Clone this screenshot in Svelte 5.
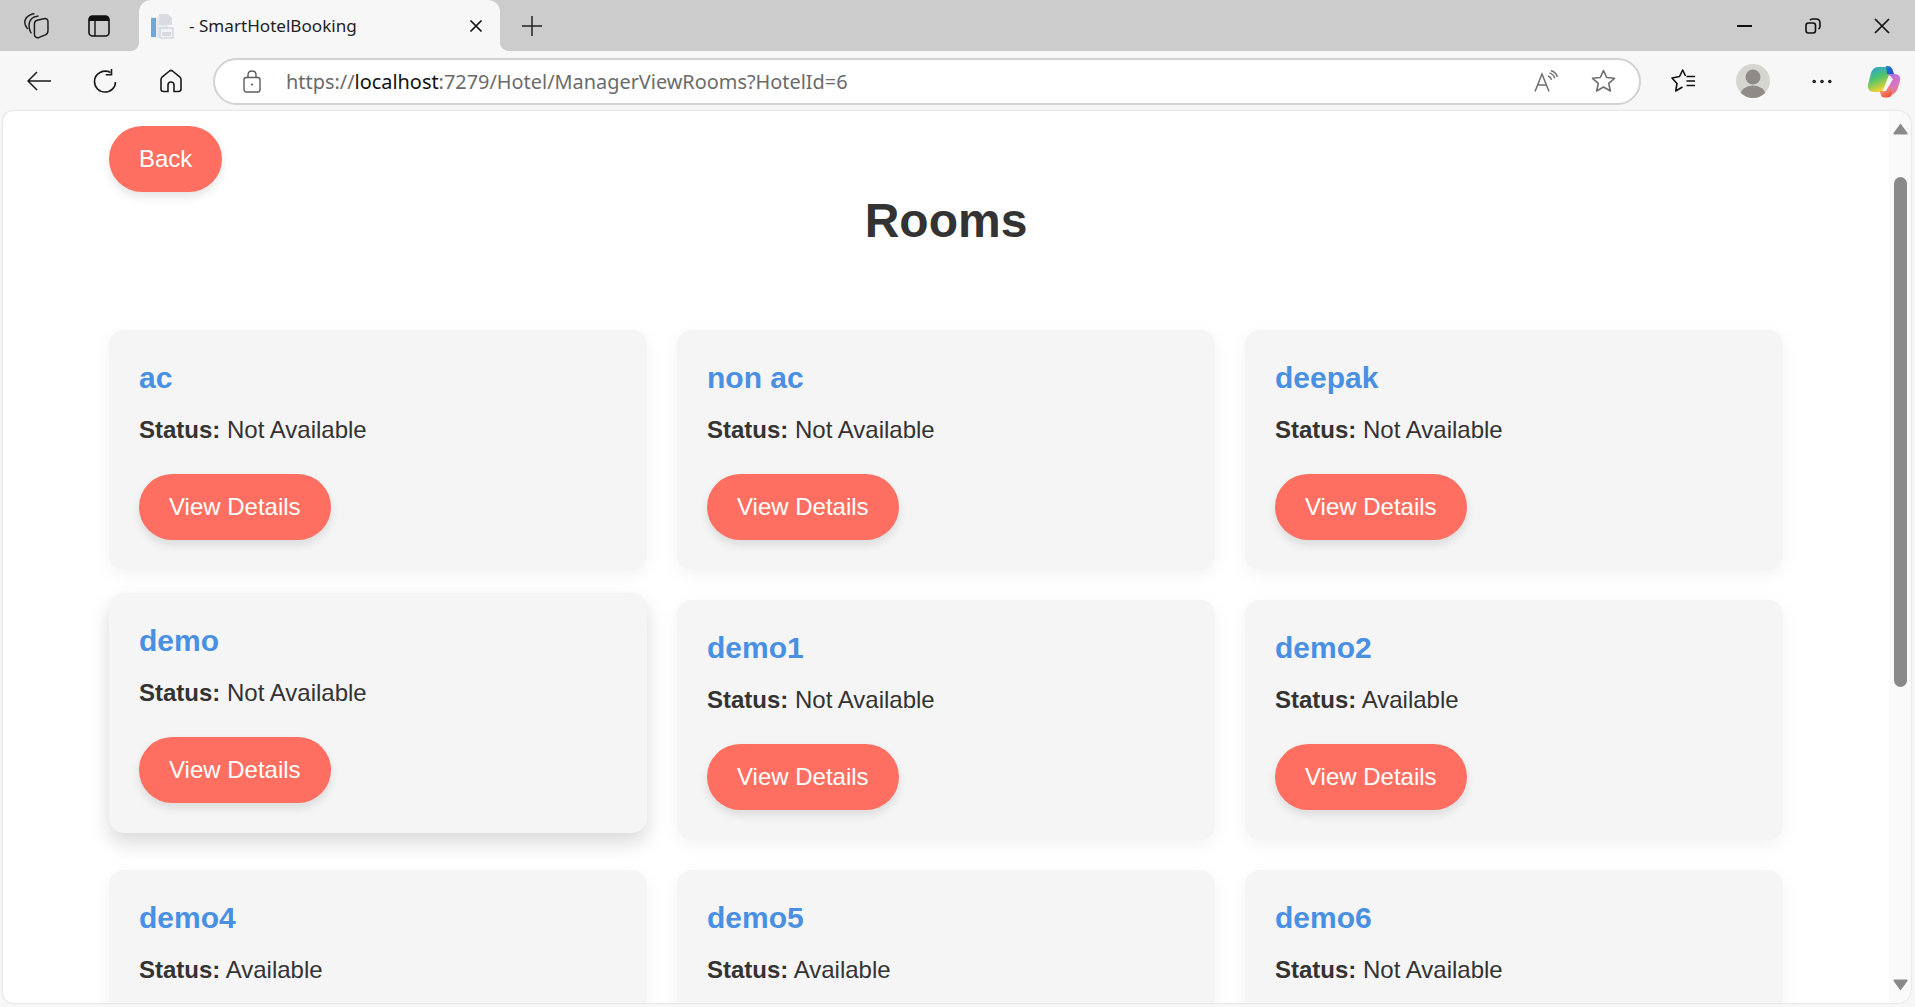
<script>
  // rooms listed for the hotel; hovered card is lifted like in the screenshot
  const rooms = [
    { name: "ac", status: "Not Available" },
    { name: "non ac", status: "Not Available" },
    { name: "deepak", status: "Not Available" },
    { name: "demo", status: "Not Available", hover: true },
    { name: "demo1", status: "Not Available" },
    { name: "demo2", status: "Available" },
    { name: "demo4", status: "Available", belowFold: true },
    { name: "demo5", status: "Available", belowFold: true },
    { name: "demo6", status: "Not Available", belowFold: true },
  ];
</script>

<div class="window">
  <!-- Tab strip -->
  <div class="tabstrip">
    <div class="strip-slot first">
      <svg width="26" height="26" viewBox="0 0 25 25" fill="none" stroke="#1a1a1a" stroke-width="1.4">
        <path d="M4.500 15.500 C2.500 13 1 10 2 7 C3 4 6 2 9 1 L11 0.800" />
        <path d="M8 19.500 C6 16.500 5.500 13 6 10 C6.500 7 8.500 5 11 3.800 L15 2.800" />
        <path d="M11 10.500 C11 8.500 12 7.500 13.500 7 L20 5.500 C22.500 5 24 6 24 8 V17 C24 19 23 20.300 21.500 21 L15.500 23.500 C13 24.300 11 23 11 21 Z" />
      </svg>
    </div>
    <div class="strip-slot second">
      <svg width="22" height="22" viewBox="0 0 22 22" fill="none">
        <rect x="1" y="1" width="20" height="20" rx="3.5" stroke="#111" stroke-width="1.6" />
        <path d="M1 6 V4.5 C1 2.5 2.5 1 4.5 1 H17.5 C19.5 1 21 2.5 21 4.5 V6 Z" fill="#111" />
        <path d="M7 6 V21" stroke="#111" stroke-width="1.4" />
      </svg>
    </div>
    <div class="tab">
      <svg class="favicon" width="24" height="26" viewBox="0 0 24 26">
        <rect x="1" y="4" width="17" height="21" fill="#e6eaef" />
        <rect x="1" y="5" width="5" height="19" fill="#6fa9d8" />
        <path d="M9 1 H18 L22 5 V12 H9 Z" fill="#d8dce2" />
        <rect x="10" y="15" width="13" height="10" fill="#f2f3f5" stroke="#c6cbd2" />
        <rect x="12" y="19" width="9" height="4" fill="#d6dae0" />
      </svg>
      <span class="tab-title">- SmartHotelBooking</span>
      <svg class="tab-close" width="14" height="14" viewBox="0 0 14 14" stroke="#111" stroke-width="1.7">
        <path d="M1.5 1.5 L12.5 12.5 M12.5 1.5 L1.5 12.5" />
      </svg>
    </div>
    <div class="strip-slot plus">
      <svg width="20" height="20" viewBox="0 0 20 20" stroke="#222" stroke-width="1.5">
        <path d="M10 0 V20 M0 10 H20" />
      </svg>
    </div>
    <div class="spacer"></div>
    <div class="win-btn">
      <svg width="16" height="4" viewBox="0 0 16 4"><rect y="1" width="15" height="2" fill="#111" /></svg>
    </div>
    <div class="win-btn">
      <svg width="16" height="16" viewBox="0 0 16 16" fill="none" stroke="#111" stroke-width="1.6">
        <rect x="1" y="5" width="9.5" height="10" rx="2.5" />
        <path d="M5 2.3 C5.6 1.4 6.4 1 7.5 1 H11 C13.5 1 15 2.5 15 5 V8.5 C15 9.6 14.5 10.4 13.5 11" />
      </svg>
    </div>
    <div class="win-btn close">
      <svg width="16" height="16" viewBox="0 0 16 16" stroke="#111" stroke-width="1.7">
        <path d="M1 1 L15 15 M15 1 L1 15" />
      </svg>
    </div>
  </div>

  <!-- Toolbar -->
  <div class="toolbar">
    <div class="tool-slot">
      <svg width="24" height="20" viewBox="0 0 24 20" fill="none" stroke="#1a1a1a" stroke-width="1.5">
        <path d="M24 10 H1.5 M10 1 L1 10 L10 19" />
      </svg>
    </div>
    <div class="tool-slot">
      <svg width="26" height="26" viewBox="0 0 26 26" fill="none" stroke="#1a1a1a" stroke-width="1.6">
        <path d="M18.5 4.5 C12 1 2.5 5 2.5 13.5 C2.5 19.5 7 24 13 24 C18.8 24 23.5 19.5 23.5 14" />
        <path d="M19.5 1 V6.7 H13.7" />
      </svg>
    </div>
    <div class="tool-slot">
      <svg width="24" height="24" viewBox="0 0 24 24" fill="none" stroke="#1a1a1a" stroke-width="1.6">
        <path d="M9 22.5 H4.5 C3 22.5 2 21.5 2 20 V10.5 C2 9.5 2.4 8.8 3 8.2 L10.5 2 C11.4 1.3 12.6 1.3 13.5 2 L21 8.2 C21.6 8.8 22 9.5 22 10.5 V20 C22 21.5 21 22.5 19.5 22.5 H15 V16 C15 14.4 13.7 13 12 13 C10.3 13 9 14.4 9 16 Z" />
      </svg>
    </div>
    <div class="addressbar">
      <svg class="lock" width="18" height="23" viewBox="0 0 18 23" fill="none" stroke="#5c5c5c" stroke-width="1.4">
        <rect x="1" y="7.5" width="16" height="14.5" rx="2.2" />
        <path d="M5 7.5 V5 C5 2.6 6.8 1 9 1 C11.2 1 13 2.6 13 5 V7.5" />
        <circle cx="9" cy="14.5" r="1.1" fill="#5c5c5c" stroke="none" />
      </svg>
      <span class="url"><span class="dim">https://</span><span class="host">localhost</span><span class="dim">:7279/Hotel/ManagerViewRooms?HotelId=6</span></span>
      <div class="spacer"></div>
      <svg class="read" width="24" height="22" viewBox="0 0 24 22" fill="none" stroke="#6e6e6e" stroke-width="1.5">
        <path d="M1 21.5 L8 4 L15 21.5 M3.6 15 H12.4" />
        <path d="M14 6 C15.7 6.6 17 8 17.6 9.8 M15.5 2.8 C18 3.6 20 5.6 20.8 8.2 M17 0.5 C20 1.5 22.4 3.8 23.4 7" stroke-width="1.4" />
      </svg>
      <svg class="star" width="25" height="24" viewBox="0 0 25 24" fill="none" stroke="#6e6e6e" stroke-width="1.6" stroke-linejoin="round">
        <path d="M12.5 1.5 L15.7 8.5 L23.5 9.3 L17.7 14.4 L19.4 22 L12.5 18 L5.6 22 L7.3 14.4 L1.5 9.3 L9.3 8.5 Z" />
      </svg>
    </div>
    <div class="tool-right">
      <div class="tool-slot wide">
        <svg width="25" height="24" viewBox="0 0 25 24" fill="none" stroke="#111" stroke-width="1.6" stroke-linejoin="round">
          <path d="M14.500 7 L11.700 1 L8.500 7.500 L1 9 L6 14.500 L4.700 22 L11.500 18" />
          <path d="M15.500 7.500 H24 M15.500 12 H24 M15.500 16.500 H24" />
        </svg>
      </div>
      <div class="tool-slot wide">
        <svg width="34" height="34" viewBox="0 0 34 34">
          <defs><clipPath id="avatar"><circle cx="17" cy="17" r="17" /></clipPath></defs>
          <circle cx="17" cy="17" r="17" fill="#d6d5d0" />
          <g clip-path="url(#avatar)" fill="#8e8b87">
            <circle cx="17" cy="13" r="7.5" />
            <ellipse cx="17" cy="31" rx="12.5" ry="9.5" />
          </g>
        </svg>
      </div>
      <div class="tool-slot wide">
        <svg width="20" height="5" viewBox="0 0 20 5" fill="#222">
          <circle cx="2.2" cy="2.5" r="1.8" /><circle cx="10" cy="2.5" r="1.8" /><circle cx="17.8" cy="2.5" r="1.8" />
        </svg>
      </div>
      <div class="tool-slot copilot">
        <svg width="34" height="33" viewBox="0 0 34 33">
          <defs>
            <linearGradient id="cpl" x1="0" y1="0" x2="0.4" y2="1">
              <stop offset="0" stop-color="#2a9fe0" />
              <stop offset="0.5" stop-color="#4cc46e" />
              <stop offset="1" stop-color="#f2d22e" />
            </linearGradient>
            <linearGradient id="cpr" x1="0.2" y1="0" x2="0.8" y2="1">
              <stop offset="0" stop-color="#b06fe0" />
              <stop offset="0.55" stop-color="#d873c8" />
              <stop offset="1" stop-color="#f0855a" />
            </linearGradient>
            <linearGradient id="cpb" x1="0" y1="0" x2="1" y2="1">
              <stop offset="0" stop-color="#1f7fd8" />
              <stop offset="1" stop-color="#2050c8" />
            </linearGradient>
            <linearGradient id="cpo" x1="0" y1="0" x2="0.7" y2="1">
              <stop offset="0" stop-color="#f9b48a" />
              <stop offset="1" stop-color="#ee4f3a" />
            </linearGradient>
          </defs>
          <path d="M11 2 H21 C24 2 25 4 24 6 L15 27 H7 C2.5 27 0.5 24 1 20 L3.5 10 C4.6 5 7 2 11 2 Z" fill="url(#cpl)" />
          <path d="M19 1 C22 0.5 24.5 1.5 25.5 4.5 L27 9 H20 Z" fill="url(#cpb)" />
          <path d="M21 9 H28 C32 9 34 12 33 16 L30.5 24 C29 28 26 30 22 30 L17 30 L26 14 Z" fill="url(#cpr)" />
          <path d="M13 26 H19 L22 21 L25 28 C25 31 23 32.500 20 32.500 H17 C14.500 32.500 13.500 30 13 26 Z" fill="url(#cpo)" />
          <path d="M17 24 L21.5 11 H23.5 L19 24 Z" fill="#fdf6f3" />
        </svg>
      </div>
    </div>
  </div>

  <!-- Page viewport -->
  <div class="viewport">
    <div class="page">
      <div class="container">
        <div class="back-row">
          <a class="btn" href="#back">Back</a>
        </div>
        <h1>Rooms</h1>
        <div class="grid">
          {#each rooms as room}
            <div class="card" class:hover={room.hover}>
              <h3>{room.name}</h3>
              <p><strong>Status:</strong> {room.status}</p>
              {#if !room.belowFold}
                <a class="btn" href="#details">View Details</a>
              {/if}
            </div>
          {/each}
        </div>
      </div>
    </div>
    <div class="scrollbar">
      <svg class="arrow" width="15" height="12" viewBox="0 0 15 12" fill="#8a8a8a">
        <path d="M7.5 0.500 L14.500 10 Q15 11.500 13.500 11.500 H1.500 Q0 11.500 0.500 10 Z" />
      </svg>
      <div class="track"><div class="thumb"></div></div>
      <svg class="arrow" width="15" height="12" viewBox="0 0 15 12" fill="#8a8a8a">
        <path d="M7.5 11.500 L14.500 2 Q15 0.500 13.500 0.500 H1.500 Q0 0.500 0.500 2 Z" />
      </svg>
    </div>
  </div>
</div>

<style>
  :global(body) {
    margin: 0;
    overflow: hidden;
  }

  .window {
    width: 1915px;
    height: 1007px;
    display: flex;
    flex-direction: column;
    background: #f7f7f7;
    overflow: hidden;
    font-family: "Liberation Sans", Arial, sans-serif;
  }

  .spacer {
    flex: 1;
  }

  /* browser chrome */
  .tabstrip {
    height: 51px;
    flex: none;
    background: #cccccc;
    display: flex;
    align-items: center;
    padding-left: 12px;
  }

  .strip-slot {
    width: 48px;
    height: 51px;
    display: flex;
    align-items: center;
    justify-content: center;
  }

  .strip-slot.second {
    margin-left: 15px;
    margin-right: 16px;
  }

  .strip-slot.plus {
    margin-left: 8px;
  }

  .tab {
    position: relative;
    width: 361px;
    height: 51px;
    box-sizing: border-box;
    background: #f7f7f7;
    border-radius: 12px 12px 0 0;
    display: flex;
    align-items: center;
    padding-left: 11px;
    font-family: "Noto Sans", sans-serif;
    font-size: 17.1px;
    color: #222;
  }

  /* little flares where the tab meets the toolbar */
  .tab::before,
  .tab::after {
    content: "";
    position: absolute;
    bottom: 0;
    width: 8px;
    height: 8px;
  }

  .tab::before {
    left: -8px;
    background: radial-gradient(circle at 0 0, transparent 7.5px, #f7f7f7 8px);
  }

  .tab::after {
    right: -8px;
    background: radial-gradient(circle at 100% 0, transparent 7.5px, #f7f7f7 8px);
  }

  .tab-title {
    margin-left: 15px;
  }

  .tab-close {
    margin-left: auto;
    margin-right: 17px;
  }

  .win-btn {
    width: 68px;
    height: 51px;
    box-sizing: border-box;
    display: flex;
    align-items: center;
    justify-content: center;
  }

  .win-btn.close {
    padding-left: 2px;
  }

  .toolbar {
    height: 60px;
    flex: none;
    box-sizing: border-box;
    padding-left: 6px;
    display: flex;
    align-items: center;
    background: #f7f7f7;
  }

  .tool-slot {
    width: 66px;
    height: 47px;
    display: flex;
    align-items: center;
    justify-content: center;
  }

  .tool-slot.wide {
    width: 69px;
  }

  .tool-slot.copilot {
    width: 56px;
  }

  .tool-right {
    display: flex;
    margin-left: 8px;
  }

  .addressbar {
    width: 1428px;
    height: 47px;
    margin-left: 9px;
    box-sizing: border-box;
    border: 2px solid #d2d2d2;
    border-radius: 24px;
    background: #fff;
    display: flex;
    align-items: center;
    padding-left: 28px;
    font-family: "Noto Sans", sans-serif;
    font-size: 19.9px;
  }

  .url {
    margin-left: 25px;
    white-space: nowrap;
  }

  .dim {
    color: #6b6b6b;
  }

  .host {
    color: #111;
  }

  .read {
    margin-right: 33px;
  }

  .star {
    margin-right: 23px;
  }

  /* page area */
  .viewport {
    flex: 1;
    min-height: 0;
    margin: 0 4px 4px 3px;
    display: flex;
    background: #fff;
    border-radius: 10px 14px 14px 10px;
    box-shadow: 0 0 2px rgba(0, 0, 0, 0.22);
    overflow: hidden;
  }

  .page {
    flex: 1;
    min-width: 0;
    overflow: hidden;
  }

  .container {
    width: 1674px;
    margin: 0 auto;
    padding-top: 15px;
  }

  .back-row {
    display: flex;
  }

  .btn {
    display: inline-block;
    padding: 19px 30px;
    border-radius: 37.5px;
    background: #ff6f61;
    color: #fff;
    font-size: 24px;
    text-decoration: none;
    box-shadow: 0 5px 10px rgba(0, 0, 0, 0.1);
  }

  h1 {
    margin: 1px 0 82px;
    text-align: center;
    font-size: 48px;
    font-weight: bold;
    color: #333;
  }

  .grid {
    display: grid;
    grid-template-columns: repeat(3, 538px);
    column-gap: 30px;
    row-gap: 30px;
  }

  .card {
    box-sizing: border-box;
    height: 240px;
    padding: 31.4px 30px 30px;
    background: #f5f5f5;
    border-radius: 15px;
    box-shadow: 0 5px 19px rgba(0, 0, 0, 0.05);
  }

  .card.hover {
    transform: translateY(-7px);
    box-shadow: 0 10px 20px rgba(0, 0, 0, 0.15);
  }

  h3 {
    margin: 0 0 21px;
    font-size: 30px;
    font-weight: bold;
    color: #4a90e2;
  }

  p {
    margin: 0 0 29.6px;
    font-size: 24px;
    color: #333;
  }

  /* fake scrollbar */
  .scrollbar {
    width: 22px;
    flex: none;
    background: #fafafa;
    display: flex;
    flex-direction: column;
    align-items: center;
    padding: 12px 0;
    box-sizing: border-box;
  }

  .arrow {
    flex: none;
  }

  .track {
    flex: 1;
    width: 13px;
    padding-top: 42px;
  }

  .thumb {
    height: 510px;
    background: #8a8a8a;
    border-radius: 7px;
  }
</style>
